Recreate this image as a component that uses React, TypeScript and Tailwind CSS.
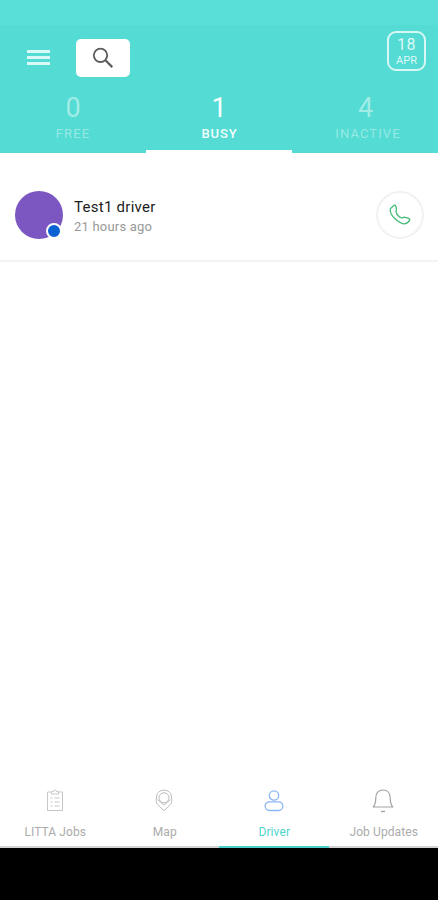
import React from "react";

const stats = [
  { value: "0", label: "FREE", active: false, valuePad: "", labelPad: "" },
  { value: "1", label: "BUSY", active: true, valuePad: "", labelPad: "pl-px" },
  { value: "4", label: "INACTIVE", active: false, valuePad: "pl-px", labelPad: "pl-[6px]" },
];

function ClipboardIcon() {
  return (
    <svg width="18" height="24" viewBox="0 0 18 24" fill="none" stroke="#c6c6c6" strokeWidth="1">
      <path d="M5 3H1.500v18.500h15V3H13" />
      <path d="M5.500 5h7V2.500h-2a1.500 1.500 0 0 0-3 0h-2z" />
      <path d="M4.500 9h2M8.500 9h5M4.500 13h2M8.500 13h5M4.500 17h2M8.500 17h5" />
    </svg>
  );
}

function MapIcon() {
  return (
    <svg width="18" height="24" viewBox="0 0 18 24" fill="none" stroke="#bcbcbc" strokeWidth="1">
      <path d="M9 21.800L2.600 15.500C1.400 14 1 12.500 1.200 10.500L2 5.200C3.500 2.500 6 1.200 9 1.200s5.500 1.300 7 4l.8 5.300c.2 2-.2 3.500-1.400 5z" />
      <circle cx="9" cy="8.800" r="5" />
      <path d="M2.500 10.500L9 16.200l6.500-5.700" />
    </svg>
  );
}

function DriverIcon() {
  return (
    <svg width="20" height="24" viewBox="0 0 20 24" fill="none" stroke="#8cb5f5" strokeWidth="1.300">
      <circle cx="10" cy="6.500" r="4.700" />
      <rect x="1.200" y="12.800" width="17.600" height="8.700" rx="4.200" />
    </svg>
  );
}

function BellIcon() {
  return (
    <svg width="22" height="24" viewBox="0 0 22 24" fill="none" stroke="#a2a2a2" strokeWidth="1.200" strokeLinejoin="round">
      <path d="M1.200 18C3 16 3.800 12.500 3.800 8.500c0-4.300 2.700-7.500 7.200-7.500s7.200 3.200 7.200 7.500c0 4 .8 7.500 2.600 9.500z" />
      <path d="M9 22.500h4" strokeWidth="1.400" />
    </svg>
  );
}

const tabs = [
  { label: "LITTA Jobs", Icon: ClipboardIcon, active: false },
  { label: "Map", Icon: MapIcon, active: false },
  { label: "Driver", Icon: DriverIcon, active: true },
  { label: "Job Updates", Icon: BellIcon, active: false },
];

export default function App() {
  return (
    <div className="flex h-[900px] w-[438px] flex-col overflow-hidden bg-white font-['Roboto',sans-serif]">
      <header className="flex h-[153px] shrink-0 flex-col bg-[#54dbd3]">
        <div className="h-[25px] shrink-0 bg-[#59dfd7]" />
        <div className="flex h-[66px] shrink-0 items-start pr-[12px] pl-[27px]">
          <button aria-label="Menu" className="mt-[25px] flex w-[23px] flex-col gap-[3px]">
            <span className="h-[3px] bg-[#d8f9f5]" />
            <span className="h-[3px] bg-[#d8f9f5]" />
            <span className="h-[3px] bg-[#d8f9f5]" />
          </button>
          <button aria-label="Search" className="mt-[14px] ml-[26px] flex h-[38px] w-[54px] items-start rounded-[5px] bg-white pt-[8px] pl-[16px]">
            <svg width="22" height="22" viewBox="0 0 22 22" fill="none" stroke="#5c5c5c">
              <circle cx="8.500" cy="8.300" r="6.700" strokeWidth="1.800" />
              <path d="M13.200 13L20.300 20.100" strokeWidth="2.200" />
            </svg>
          </button>
          <div className="mt-[6px] ml-auto flex h-[40px] w-[39px] flex-col items-center rounded-[9px] border-2 border-[#d6f8f5] pt-[3px] text-[#dcf9f6]">
            <span className="text-[16px] leading-[17px] tracking-[0.500px]">18</span>
            <span className="text-[11px] leading-[15px]">APR</span>
          </div>
        </div>
        <div className="grid h-[62px] grid-cols-3">
          {stats.map((s) => (
            <div
              key={s.label}
              className={`flex flex-col items-center border-b-[3px] ${
                s.active ? "border-white text-[#f4fefd]" : "border-transparent text-[#a2ece7]"
              }`}
            >
              <span className={`text-[27px] leading-[34px] ${s.valuePad}`}>{s.value}</span>
              <span
                className={`text-[13px] leading-[18px] ${s.labelPad} ${
                  s.active ? "font-medium tracking-[0.900px]" : "tracking-[1.100px] text-[#98e9e4]"
                }`}
              >
                {s.label}
              </span>
            </div>
          ))}
        </div>
      </header>

      <main className="flex-1 bg-white">
        <div className="flex h-[109px] items-start border-b-2 border-[#f3f3f3] pr-[14px] pl-[15px]">
          <div className="relative mt-[38px] size-[48px] rounded-full bg-[#7c57c2]">
            <span className="absolute right-px bottom-0 size-[16px] rounded-full border-2 border-white bg-[#0c61d3]" />
          </div>
          <div className="mt-[45px] ml-[11px] flex flex-col">
            <span className="text-[15px] leading-[19px] tracking-[0.270px] text-[#1d1d1d]">Test1 driver</span>
            <span className="text-[13px] leading-[19px] tracking-[0.200px] text-[#999]">21 hours ago</span>
          </div>
          <button aria-label="Call" className="mt-[38px] ml-auto flex size-[48px] items-center justify-center rounded-full border-2 border-[#f2f2f2]">
            <svg width="22" height="22" viewBox="0 0 22 22" fill="none" stroke="#45bd78" strokeWidth="1.300" strokeLinejoin="round">
              <path d="M1.800 4.200L4.800 1.500c.7-.6 1.500-.3 1.900.5l.8 3c.2 1-.6 1.700-.5 2.700.4 2.500 3.200 5.500 5.500 6.200 1 .3 1.700-.7 2.700-.7l4.500 1.100c1.100.4 1.400 1.200.8 2.100-1.300 2.200-3.300 3.700-5.800 3.400C8.500 18.700 1 11 1.200 5.700c0-.6.200-1.100.6-1.500z" />
            </svg>
          </button>
        </div>
      </main>

      <nav className="grid h-[77px] shrink-0 grid-cols-4 bg-white">
        {tabs.map(({ label, Icon, active }) => (
          <div
            key={label}
            className={`flex flex-col items-center border-b-2 pt-[18px] ${
              active ? "border-[#4ccfc7] text-[#4fd5ce]" : "border-[#d2d2d2] text-[#ababab]"
            }`}
          >
            <Icon />
            <span className="mt-[11px] pl-px text-[12px] leading-[16px] tracking-[0.100px]">{label}</span>
          </div>
        ))}
      </nav>
      <div className="h-[52px] shrink-0 bg-black" />
    </div>
  );
}
